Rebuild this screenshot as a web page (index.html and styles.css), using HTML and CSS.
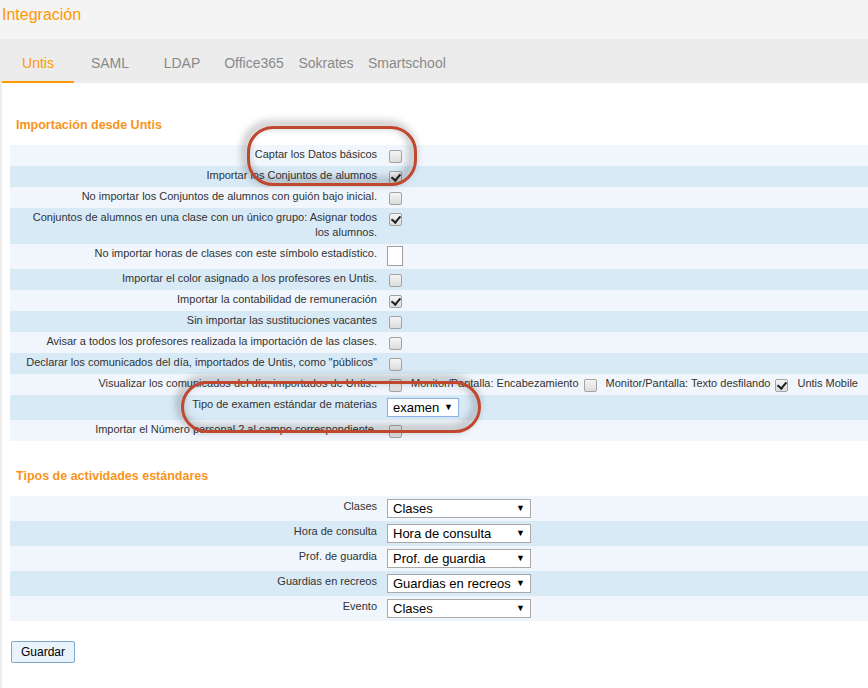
FILE: index.html
```html
<!DOCTYPE html>
<html lang="es">
<head>
<meta charset="utf-8">
<title>Integración</title>
<link rel="stylesheet" href="styles.css">
</head>
<body>
<header class="page-header"><h1 class="page-title">Integración</h1></header>
<nav class="tabs">
  <a class="tab active">Untis</a>
  <a class="tab">SAML</a>
  <a class="tab">LDAP</a>
  <a class="tab">Office365</a>
  <a class="tab">Sokrates</a>
  <a class="tab">Smartschool</a>
</nav>
<main class="content">
  <h2 class="section-title">Importación desde Untis</h2>
  <table class="form-table">
    <colgroup><col class="col-label"><col></colgroup>
    <tbody>
      <tr><td class="lbl">Captar los Datos básicos</td><td class="val"><input type="checkbox" class="cb"></td></tr>
      <tr><td class="lbl">Importar los Conjuntos de alumnos</td><td class="val"><input type="checkbox" class="cb" checked></td></tr>
      <tr><td class="lbl">No importar los Conjuntos de alumnos con guión bajo inicial.</td><td class="val"><input type="checkbox" class="cb"></td></tr>
      <tr><td class="lbl">Conjuntos de alumnos en una clase con un único grupo: Asignar todos los alumnos.</td><td class="val"><input type="checkbox" class="cb" checked></td></tr>
      <tr><td class="lbl">No importar horas de clases con este símbolo estadístico.</td><td class="val"><input type="text" class="txt"></td></tr>
      <tr><td class="lbl">Importar el color asignado a los profesores en Untis.</td><td class="val"><input type="checkbox" class="cb"></td></tr>
      <tr><td class="lbl">Importar la contabilidad de remuneración</td><td class="val"><input type="checkbox" class="cb" checked></td></tr>
      <tr><td class="lbl">Sin importar las sustituciones vacantes</td><td class="val"><input type="checkbox" class="cb"></td></tr>
      <tr><td class="lbl">Avisar a todos los profesores realizada la importación de las clases.</td><td class="val"><input type="checkbox" class="cb"></td></tr>
      <tr><td class="lbl">Declarar los comunicados del día, importados de Untis, como "públicos"</td><td class="val"><input type="checkbox" class="cb"></td></tr>
      <tr><td class="lbl">Visualizar los comunicados del día, importados de Untis..</td>
        <td class="val"><div class="multi">
          <input type="checkbox" class="cb"><span class="opt">Monitor/Pantalla: Encabezamiento</span>
          <input type="checkbox" class="cb"><span class="opt">Monitor/Pantalla: Texto desfilando</span>
          <input type="checkbox" class="cb" checked><span class="opt">Untis Mobile</span>
        </div></td></tr>
      <tr><td class="lbl">Tipo de examen estándar de materias</td><td class="val"><span class="selwrap"><select class="sel sel-short focused"><option>examen</option></select></span></td></tr>
      <tr><td class="lbl">Importar el Número personal 2 al campo correspondiente.</td><td class="val"><input type="checkbox" class="cb"></td></tr>
    </tbody>
  </table>

  <h2 class="section-title second">Tipos de actividades estándares</h2>
  <table class="form-table tall">
    <colgroup><col class="col-label"><col></colgroup>
    <tbody>
      <tr><td class="lbl">Clases</td><td class="val"><span class="selwrap"><select class="sel"><option>Clases</option></select></span></td></tr>
      <tr><td class="lbl">Hora de consulta</td><td class="val"><span class="selwrap"><select class="sel"><option>Hora de consulta</option></select></span></td></tr>
      <tr><td class="lbl">Prof. de guardia</td><td class="val"><span class="selwrap"><select class="sel"><option>Prof. de guardia</option></select></span></td></tr>
      <tr><td class="lbl">Guardias en recreos</td><td class="val"><span class="selwrap"><select class="sel"><option>Guardias en recreos</option></select></span></td></tr>
      <tr><td class="lbl">Evento</td><td class="val"><span class="selwrap"><select class="sel"><option>Clases</option></select></span></td></tr>
    </tbody>
  </table>

  <button class="btn" type="button">Guardar</button>

  <div class="callout callout-1"></div>
  <div class="callout callout-2"></div>
</main>
</body>
</html>
```
FILE: styles.css
```css
* { box-sizing: border-box; }
html, body { margin: 0; padding: 0; }
body {
  background: #ececec;
  font-family: "Liberation Sans", Arial, sans-serif;
  font-size: 11px;
  color: #333;
}
.page-header {
  height: 39px;
  background: #f4f4f4;
  padding: 6px 2px 0;
}
.page-title {
  margin: 0;
  font-size: 16px;
  font-weight: normal;
  line-height: 18px;
  color: #f90;
}
.tabs {
  display: flex;
  height: 44px;
  background: #ececec;
  padding-left: 2px;
}
.tab {
  min-width: 72px;
  height: 44px;
  padding: 16px 6px 0;
  text-align: center;
  font-size: 14px;
  line-height: 16px;
  color: #8a8a8a;
  border-bottom: 2px solid transparent;
}
.tab.active {
  color: #f90;
  border-bottom-color: #f90;
}
.content {
  position: relative;
  background: #fff;
  margin-left: 2px;
  padding: 35px 0 20px 8px;
  min-height: calc(100vh - 83px);
}
.section-title {
  margin: 0 0 12px 6px;
  font-size: 12.5px;
  line-height: 15px;
  font-weight: bold;
  color: #f7941d;
}
.section-title.second { margin-top: 28px; }
.form-table {
  width: 100%;
  border-collapse: collapse;
  table-layout: fixed;
}
.col-label { width: 375px; }
.form-table tr:nth-child(odd) { background: #f0f6fb; }
.form-table tr:nth-child(even) { background: #d9eaf7; }
.form-table td { vertical-align: top; }
.lbl {
  text-align: right;
  padding: 2px 8px 4px 12px;
  line-height: 15px;
  color: #333;
}
.tall .lbl { padding-top: 3px; }
.val { padding: 0; }
.cb {
  -webkit-appearance: none;
  appearance: none;
  position: relative;
  display: inline-block;
  flex: 0 0 13px;
  vertical-align: top;
  width: 13px;
  height: 13px;
  margin: 5px 3px 3px 4px;
  border: 1px solid #a3a3a3;
  border-radius: 2px;
  background: linear-gradient(#f5f5f5, #dcdcdc);
}
.cb:checked::after {
  content: "";
  position: absolute;
  left: 3px;
  top: 0;
  width: 4px;
  height: 7px;
  border: solid #222;
  border-width: 0 2px 2px 0;
  transform: rotate(40deg);
}
.txt {
  display: block;
  width: 16px;
  height: 20px;
  margin: 2px 0 3px 2px;
  padding: 0;
  border: 1px solid #a0a0a0;
  background: #fff;
}
.multi {
  display: flex;
  align-items: flex-start;
  white-space: nowrap;
}
.multi .cb { margin-right: 0; margin-left: 5px; }
.multi .cb:first-child { margin-left: 4px; }
.opt {
  padding-top: 2px;
  line-height: 15px;
  margin-left: 9px;
  color: #333;
}
.selwrap {
  position: relative;
  display: inline-block;
  vertical-align: top;
  margin: 3px 0 3px 2px;
}
.selwrap::after {
  content: "▼";
  position: absolute;
  right: 6px;
  top: 4px;
  font-size: 9px;
  line-height: 10px;
  color: #000;
  pointer-events: none;
}
.sel {
  -webkit-appearance: none;
  appearance: none;
  display: block;
  width: 144px;
  height: 19px;
  margin: 0;
  padding: 0 16px 0 5px;
  border: 1px solid #a9a9a9;
  border-radius: 0;
  background: #fff;
  font-family: "Liberation Sans", Arial, sans-serif;
  font-size: 13px;
  color: #000;
}
.sel-short { width: 72px; }
.sel.focused {
  border-color: #8fb3e4;
  box-shadow: 0 0 1px #a8c6ef;
}
.btn {
  display: block;
  margin: 20px 0 0 1px;
  height: 22px;
  padding: 0 9px;
  border: 1px solid #7ea6cf;
  border-radius: 2px;
  background: #eaf2fa;
  font-family: "Liberation Sans", Arial, sans-serif;
  font-size: 12px;
  color: #000;
}
.callout {
  position: absolute;
  border: 3px solid #c0482f;
  border-radius: 26px;
  filter: drop-shadow(-3px -3px 4px rgba(0, 0, 0, 0.55));
  pointer-events: none;
}
.callout-1 { left: 245px; top: 43px; width: 170px; height: 60px; }
.callout-2 { left: 179px; top: 298px; width: 300px; height: 52px; }
```
